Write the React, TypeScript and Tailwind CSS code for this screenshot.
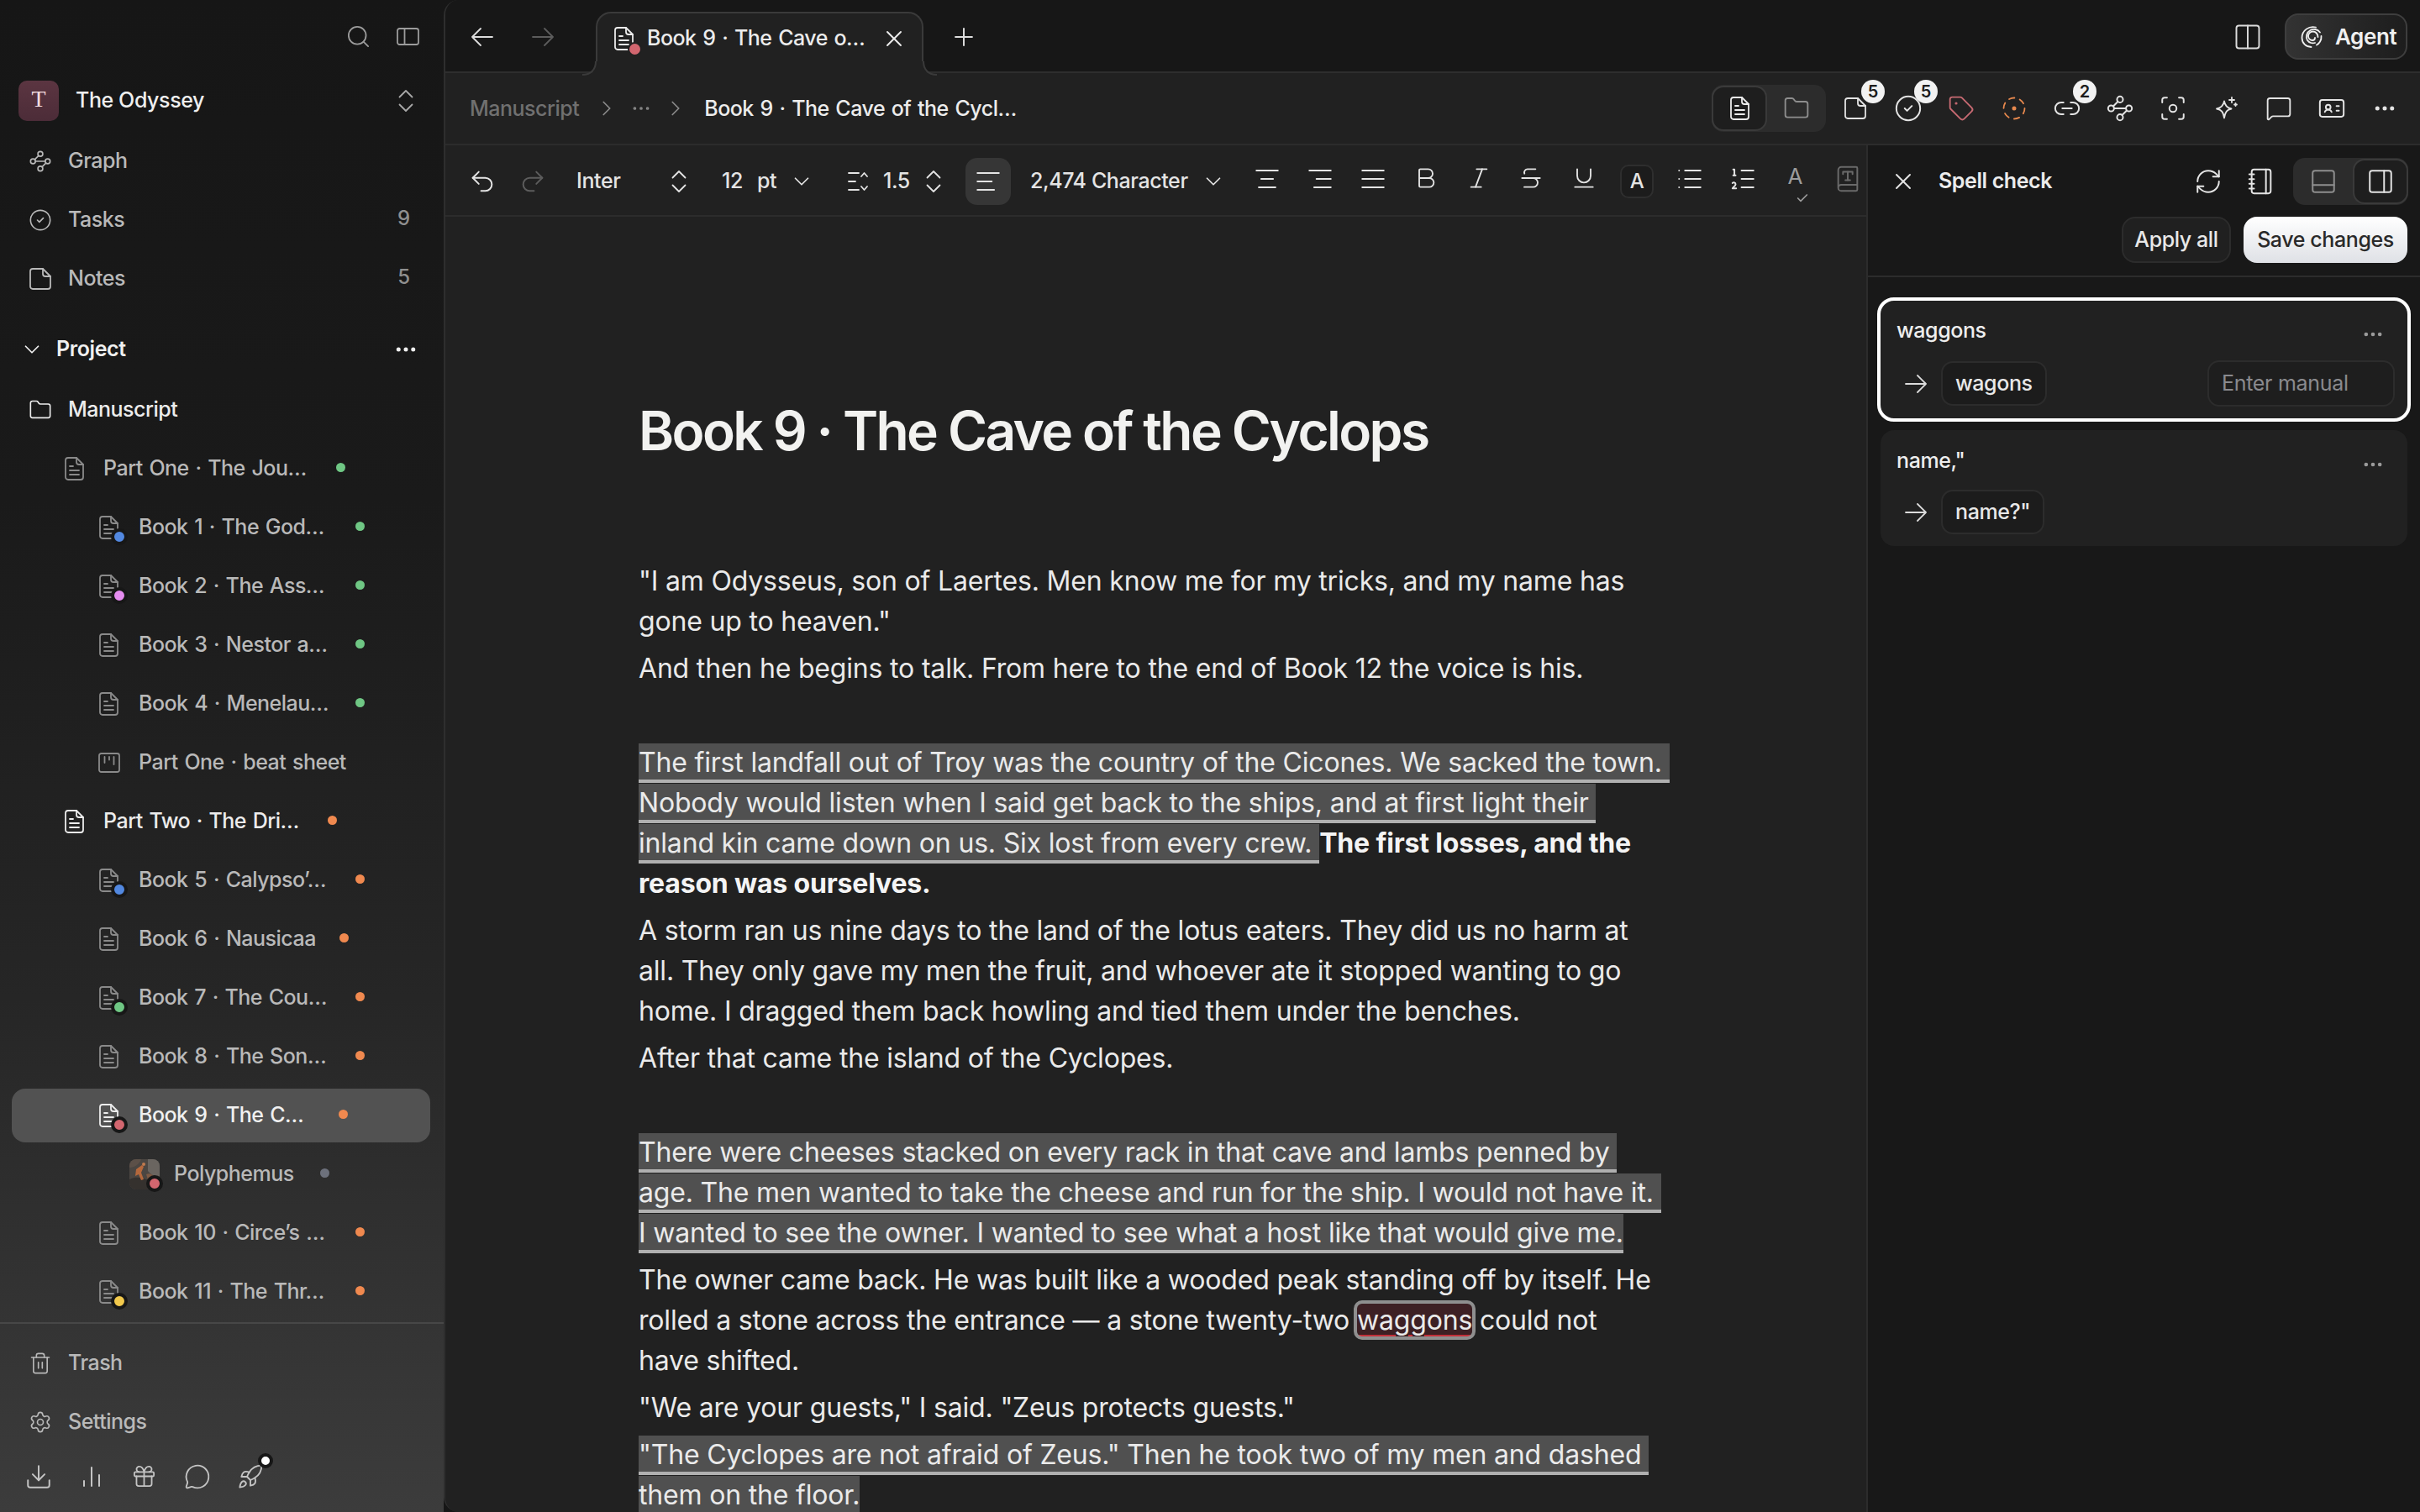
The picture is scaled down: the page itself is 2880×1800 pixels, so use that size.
import type { ReactNode } from "react";
import {
  AlignCenter,
  AlignJustify,
  AlignLeft,
  AlignRight,
  Bold,
  BookType,
  Check,
  ChevronDown,
  ChevronRight,
  ChevronsUpDown,
  CircleCheck,
  Columns2,
  Download,
  Ellipsis,
  Focus,
  Folder,
  Gift,
  IdCard,
  Italic,
  Link2,
  List,
  ListOrdered,
  MessageCircle,
  MessageSquare,
  Notebook,
  PanelBottom,
  PanelRight,
  Plus,
  Redo2,
  RefreshCw,
  Rocket,
  Search,
  Settings,
  Strikethrough,
  Tag,
  Trash2,
  Underline,
  Undo2,
  Waypoints,
  X,
} from "lucide-react";

const sw = 1.4;

function DocIcon({ className }: { className?: string }) {
  return (
    <svg viewBox="0 0 23 28" width="23" height="28" fill="none" stroke="currentColor" strokeWidth="1.8" strokeLinecap="round" strokeLinejoin="round" className={className}>
      <path d="M4 1h10l8 8v15a3 3 0 0 1-3 3H4a3 3 0 0 1-3-3V4a3 3 0 0 1 3-3z" />
      <path d="M14 1v5a3 3 0 0 0 3 3h5" />
      <path d="M6 11h4M6 16h11M6 21h11" />
    </svg>
  );
}

function NoteIcon() {
  return (
    <svg viewBox="0 0 26 26" width="26" height="26" fill="none" stroke="currentColor" strokeWidth="1.8" strokeLinecap="round" strokeLinejoin="round">
      <path d="M4 1h12l9 9v12a3 3 0 0 1-3 3H4a3 3 0 0 1-3-3V4a3 3 0 0 1 3-3z" />
      <path d="M16 1v6a3 3 0 0 0 3 3h6" />
    </svg>
  );
}

function SideIcon() {
  return (
    <svg viewBox="0 0 27 21" width="27" height="21" fill="none" stroke="currentColor" strokeWidth="1.8" strokeLinejoin="round">
      <rect x="1" y="1" width="25" height="19" rx="2.5" />
      <path d="M9.500 1v19" />
    </svg>
  );
}

function ArrowIcon({ left }: { left?: boolean }) {
  return (
    <svg viewBox="0 0 26 22" width="26" height="22" fill="none" stroke="currentColor" strokeWidth="1.8" strokeLinecap="round" strokeLinejoin="round">
      {left ? <path d="M25 11H1M11 1L1 11l10 10" /> : <path d="M1 11h24M15 1l10 10-10 10" />}
    </svg>
  );
}

function BoardIcon() {
  return (
    <svg viewBox="0 0 26 24" width="26" height="24" fill="none" stroke="currentColor" strokeWidth="1.8" strokeLinecap="round" className="-mx-[1.500px] text-[#8a8a8a]">
      <rect x="1" y="1" width="24" height="22" rx="2.5" />
      <path d="M7.500 5v7M13 5v3.500M18.500 5v9" />
    </svg>
  );
}

function BarsIcon() {
  return (
    <svg viewBox="0 0 26 28" width="26" height="28" fill="none" stroke="currentColor" strokeWidth="2" strokeLinecap="round">
      <path d="M4 19v6M13 3v22M22 12v13" />
    </svg>
  );
}

function LineHeightIcon() {
  return (
    <svg viewBox="0 0 28 28" width="28" height="28" fill="none" stroke="currentColor" strokeWidth="1.8" strokeLinecap="round" strokeLinejoin="round">
      <path d="M2 4h12M2 14h8M2 24h12" />
      <path d="M17 8l3.500-4L24 8M17 20l3.500 4 3.500-4" />
    </svg>
  );
}

function DashedTarget() {
  return (
    <svg viewBox="0 0 28 28" width="28" height="28" fill="none" stroke="#e8894e" strokeWidth="1.8" strokeLinecap="round">
      <circle cx="14" cy="14" r="12.500" strokeDasharray="6.500 6.600" />
      <circle cx="14" cy="14" r="1.600" fill="#e8894e" />
    </svg>
  );
}

function SparkIcon() {
  return (
    <svg viewBox="0 0 30 30" width="30" height="30" fill="none" stroke="currentColor" strokeWidth="1.8" strokeLinecap="round" strokeLinejoin="round">
      <path d="M13 6.500c1 5.500 3.500 8 8.500 9-5 1-7.500 3.500-8.500 11-1-7.500-3.500-10-9-11 5.500-1 8-3.500 9-9z" />
      <path d="M22 2v6M19 5h6M26.500 9v3M25 10.500h3" />
    </svg>
  );
}

function SpiralIcon() {
  return (
    <svg viewBox="0 0 28 28" width="28" height="28" fill="none" stroke="currentColor" strokeWidth="1.8" strokeLinecap="round">
      <path d="M19 2.500C11 0.500 2.500 6 2.500 15c0 6.500 5 11 11 11" />
      <path d="M24 8.500C21 4.500 16 4 12.500 6 8 8.500 6.500 14 9 18c2 3 6 4 9 3" />
      <path d="M25.500 13c.500 5-2.500 9-5.500 10.500" />
      <path d="M21.500 14c0-4-3-6.500-6-6.500s-5.500 2.500-5.500 5.500 2.500 5 5 5c2 0 3-1.500 3-3" />
    </svg>
  );
}

function Painting() {
  return (
    <svg viewBox="0 0 36 36" width="36" height="36" className="rounded-[8px]">
      <rect width="36" height="36" fill="#4b4642" />
      <path d="M0 24c8-4 14-2 20 0s12 2 16 0v12H0z" fill="#35312e" />
      <path d="M22 0h14v20c-6 2-10-2-14-6z" fill="#6a6560" />
      <path d="M0 0h14c-2 6-8 10-14 10z" fill="#5c5048" />
      <path d="M8 12l7-5 2 2-3 7 3 8-3 1-3-7-4 2z" fill="#b5683c" />
      <circle cx="17" cy="6" r="2" fill="#c07a4e" />
      <path d="M20 18c4-2 8 0 10 4l-8 2z" fill="#7d5a44" />
    </svg>
  );
}

function Badge({ color, className }: { color: string; className: string }) {
  return <span className={`absolute size-[20px] rounded-full border-4 border-[#171717] ${color} ${className}`} />;
}

type Item = {
  label: string;
  pad: string;
  gap: string;
  width: string;
  dot?: string;
  badge?: string;
  kind?: "doc" | "board" | "thumb";
  active?: boolean;
  bright?: boolean;
};

const green = "bg-[#6fc784]";
const orange = "bg-[#f0894f]";
const d1 = "pl-[63px]";
const g1 = "ml-[23px]";
const d2 = "pl-[104px]";
const g2 = "ml-[24px]";
const bookW = "w-[258px]";

const tree: Item[] = [
  { label: "Part One · The Jou…", pad: d1, gap: g1, width: "w-[277px]", dot: green },
  { label: "Book 1 · The God…", pad: d2, gap: g2, width: bookW, dot: green, badge: "bg-[#5288e0]" },
  { label: "Book 2 · The Ass…", pad: d2, gap: g2, width: bookW, dot: green, badge: "bg-[#e58cf0]" },
  { label: "Book 3 · Nestor a…", pad: d2, gap: g2, width: bookW, dot: green },
  { label: "Book 4 · Menelau…", pad: d2, gap: g2, width: bookW, dot: green },
  { label: "Part One · beat sheet", pad: d2, gap: g2, width: "w-[258px]", kind: "board" },
  { label: "Part Two · The Dri…", pad: d1, gap: g1, width: "w-[267px]", dot: orange, bright: true },
  { label: "Book 5 · Calypso’…", pad: d2, gap: g2, width: bookW, dot: orange, badge: "bg-[#5288e0]" },
  { label: "Book 6 · Nausicaa", pad: d2, gap: g2, width: "w-[239px]", dot: orange },
  { label: "Book 7 · The Cou…", pad: d2, gap: g2, width: bookW, dot: orange, badge: "bg-[#6fc784]" },
  { label: "Book 8 · The Son…", pad: d2, gap: g2, width: bookW, dot: orange },
  { label: "Book 9 · The C…", pad: d2, gap: g2, width: "w-[238px]", dot: orange, badge: "bg-[#d2666f]", active: true },
  { label: "Polyphemus", pad: "pl-[140px]", gap: "ml-[17px]", width: "w-[174px]", dot: "bg-[#6d717c]", badge: "bg-[#d2666f]", kind: "thumb" },
  { label: "Book 10 · Circe’s …", pad: d2, gap: g2, width: bookW, dot: orange },
  { label: "Book 11 · The Thr…", pad: d2, gap: g2, width: bookW, dot: orange, badge: "bg-[#f2c94c]" },
];

function TreeRow({ item }: { item: Item }) {
  const tone = item.active
    ? "bg-[#525252] text-[#f0f0f0]"
    : item.bright
      ? "text-[#ececec]"
      : "text-[#b9b9b9]";
  const iconTone = item.active || item.bright ? "text-[#ececec]" : "text-[#8a8a8a]";
  return (
    <div className={`ml-[14px] mr-[16px] flex h-[64px] shrink-0 items-center rounded-[16px] ${item.pad} ${tone}`}>
      <span className="relative flex shrink-0 items-center justify-center">
        {item.kind === "thumb" ? <Painting /> : item.kind === "board" ? <BoardIcon /> : <DocIcon className={iconTone} />}
        {item.badge ? (
          <Badge color={item.badge} className={item.kind === "thumb" ? "-right-[4px] -bottom-[3px]" : "-right-[11px] -bottom-[7px]"} />
        ) : null}
      </span>
      <span className={`whitespace-nowrap text-[25px] font-medium tracking-[-0.5px] [word-spacing:1.500px] ${item.gap} ${item.width}`}>{item.label}</span>
      {item.dot ? <span className={`size-[11px] -translate-y-[2px] rounded-full ${item.dot}`} /> : null}
    </div>
  );
}

function NavRow({ icon, label, count, bright }: { icon: ReactNode; label: string; count?: string; bright?: boolean }) {
  return (
    <div className={`mx-[14px] flex h-[64px] shrink-0 items-center pl-[20px] pr-[22px] ${bright ? "text-[#ececec]" : "text-[#b9b9b9]"}`}>
      <span className="flex w-[28px] shrink-0 justify-center">{icon}</span>
      <span className="ml-[19px] text-[25px] font-medium tracking-[-0.5px]">{label}</span>
      {count ? <span className="ml-auto -translate-y-[2px] pr-[4px] text-[24px] font-medium text-[#8f8f8f]">{count}</span> : null}
    </div>
  );
}

function Sidebar() {
  return (
    <aside className="flex h-full w-[528px] shrink-0 flex-col overflow-hidden bg-[linear-gradient(180deg,#161616_0%,#1a1a1a_33%,#262626_66%,#3c3c3c_100%)]">
      <div className="flex h-[89px] shrink-0 items-center justify-end gap-[30px] pb-[2px] pr-[29px] text-[#9c9c9c]">
        <Search size={31} strokeWidth={sw} />
        <SideIcon />
      </div>
      <div className="flex h-[62px] shrink-0 items-center pl-[22px] pr-[27px]">
        <span className="flex size-[48px] items-center justify-center rounded-[10px] bg-[linear-gradient(180deg,#5b3541,#4c2c38)] pb-[4px] [font-family:'Liberation_Serif',serif] text-[28px] text-[#f3dde0]">
          T
        </span>
        <span className="ml-[20px] text-[25px] font-medium tracking-[-0.4px] text-[#efefef]">The Odyssey</span>
        <ChevronsUpDown size={36} strokeWidth={1.2} className="ml-auto text-[#a8a8a8]" />
      </div>
      <div className="mt-[9px] flex shrink-0 flex-col gap-[6px]">
        <NavRow icon={<Waypoints size={34} strokeWidth={sw} />} label="Graph" />
        <NavRow icon={<CircleCheck size={34} strokeWidth={sw} />} label="Tasks" count="9" />
        <NavRow icon={<NoteIcon />} label="Notes" count="5" />
      </div>
      <div className="mx-[14px] mt-[20px] flex h-[64px] shrink-0 items-center pl-[9px] pr-[16px] text-[#f0f0f0]">
        <ChevronDown size={30} strokeWidth={sw} />
        <span className="ml-[14px] text-[25px] font-semibold tracking-[-0.4px]">Project</span>
        <Ellipsis size={30} strokeWidth={2} className="ml-auto" />
      </div>
      <div className="mt-[8px] flex min-h-0 flex-1 flex-col gap-[6px] overflow-hidden">
        <NavRow bright icon={<Folder size={34} strokeWidth={sw} />} label="Manuscript" />
        {tree.map((item) => (
          <TreeRow key={item.label} item={item} />
        ))}
      </div>
      <div className="flex shrink-0 flex-col gap-[6px] border-t-2 border-[#474747] pt-[15px]">
        <NavRow icon={<Trash2 size={32} strokeWidth={sw} />} label="Trash" />
        <NavRow icon={<Settings size={34} strokeWidth={sw} />} label="Settings" />
      </div>
      <div className="flex h-[75px] shrink-0 items-center pb-[10px] pl-[14px] text-[#c4c4c4]">
        <span className="flex w-[63px] justify-center"><Download size={34} strokeWidth={sw} /></span>
        <span className="flex w-[63px] justify-center"><BarsIcon /></span>
        <span className="flex w-[63px] justify-center"><Gift size={31} strokeWidth={sw} /></span>
        <span className="flex w-[63px] justify-center"><MessageCircle size={32} strokeWidth={sw} /></span>
        <span className="relative flex w-[63px] justify-center">
          <Rocket size={32} strokeWidth={sw} />
          <span className="absolute -top-[12px] right-[4px] size-[18px] rounded-full border-4 border-[#171717] bg-white" />
        </span>
      </div>
    </aside>
  );
}

function TabBar() {
  return (
    <div className="relative flex h-[87px] shrink-0 items-start border-b-2 border-[#2e2e2e] bg-[#171717] pl-[16px] pr-[15px]">
      <span className="flex h-[87px] w-[56px] items-center justify-center text-[#dcdcdc]"><ArrowIcon left /></span>
      <span className="ml-[16px] flex h-[87px] w-[56px] items-center justify-center text-[#5c5c5c]"><ArrowIcon /></span>
      <div className="relative z-10 ml-[35px] mt-[14px] flex h-[75px] w-[390px] items-center rounded-t-[18px] border-x-2 border-t-2 border-[#3a3a3a] bg-[#212121] pb-[14px] text-[#ececec]">
        <svg viewBox="0 0 18 18" width="18" height="18" className="absolute -bottom-[2px] -left-[18px]">
          <path d="M18 0v18H0c10 0 16-6 16-18z" fill="#212121" />
          <path d="M0 16c10 0 16-6 16-16" fill="none" stroke="#3a3a3a" strokeWidth="2" />
        </svg>
        <svg viewBox="0 0 18 18" width="18" height="18" className="absolute -bottom-[2px] -right-[18px]">
          <path d="M0 0v18h18C8 18 2 12 2 0z" fill="#212121" />
          <path d="M18 16C8 16 2 10 2 0" fill="none" stroke="#3a3a3a" strokeWidth="2" />
        </svg>
        <span className="relative ml-[20px] flex shrink-0">
          <DocIcon />
          <Badge color="bg-[#d2666f]" className="-right-[10px] -bottom-[7px] !size-[17px] !border-[#212121] !border-[2px]" />
        </span>
        <span className="ml-[16px] whitespace-nowrap text-[25px] font-medium tracking-[-0.5px] [word-spacing:1.500px]">Book 9 · The Cave o…</span>
        <X size={32} strokeWidth={sw} className="ml-auto mr-[17px]" />
      </div>
      <span className="ml-[20px] flex h-[87px] w-[56px] items-center justify-center text-[#dcdcdc]"><Plus size={34} strokeWidth={sw} /></span>
      <div className="ml-auto flex h-[87px] items-center">
        <Columns2 size={36} strokeWidth={1.3} className="text-[#dcdcdc]" />
        <div className="ml-[26px] flex h-[55px] w-[146px] items-center rounded-[16px] border-2 border-[#3e3e3e] bg-[linear-gradient(90deg,#333333,#1d1d1d)] pl-[16px] text-[#f0f0f0]">
          <SpiralIcon />
          <span className="ml-[14px] text-[26px] font-semibold tracking-[-0.4px]">Agent</span>
        </div>
      </div>
    </div>
  );
}

function CountIcon({ children, count }: { children: ReactNode; count?: string }) {
  return (
    <span className="relative flex h-[34px] w-[63px] shrink-0 items-center justify-center text-[#e4e4e4]">
      {children}
      {count ? (
        <span className="absolute -top-[17px] left-[39px] flex size-[28px] items-center justify-center rounded-full bg-[#f2f2f2] text-[20px] font-semibold text-[#1c1c1c]">
          {count}
        </span>
      ) : null}
    </span>
  );
}

function Breadcrumb() {
  return (
    <div className="flex h-[86px] shrink-0 items-center border-b-2 border-[#2c2c2c] bg-[#212121] pl-[29px] pr-[11px]">
      <span className="translate-y-[1px] text-[25px] font-medium tracking-[-0.5px] text-[#707070]">Manuscript</span>
      <ChevronRight size={30} strokeWidth={sw} className="ml-[18px] text-[#8a8a8a]" />
      <Ellipsis size={26} strokeWidth={sw} className="ml-[13px] text-[#8a8a8a]" />
      <ChevronRight size={30} strokeWidth={sw} className="ml-[13px] text-[#8a8a8a]" />
      <span className="ml-[19px] translate-y-[1px] text-[25px] font-medium tracking-[-0.5px] text-[#ececec] [word-spacing:1.500px]">Book 9 · The Cave of the Cycl…</span>
      <div className="ml-auto mr-[3px] flex h-[56px] w-[136px] items-center rounded-[14px] bg-[#2c2c2c]">
        <span className="flex h-[54px] w-[66px] items-center justify-center rounded-[14px] border-2 border-[#3a3a3a] bg-[#1e1e1e] text-[#ececec]">
          <DocIcon />
        </span>
        <span className="flex flex-1 justify-center text-[#8e8e8e]"><Folder size={32} strokeWidth={sw} /></span>
      </div>
      <CountIcon count="5"><NoteIcon /></CountIcon>
      <CountIcon count="5"><CircleCheck size={34} strokeWidth={sw} /></CountIcon>
      <CountIcon><Tag size={32} strokeWidth={sw} className="text-[#c76a72]" /></CountIcon>
      <CountIcon><DashedTarget /></CountIcon>
      <CountIcon count="2"><Link2 size={34} strokeWidth={sw} /></CountIcon>
      <CountIcon><Waypoints size={34} strokeWidth={sw} /></CountIcon>
      <CountIcon><Focus size={34} strokeWidth={sw} /></CountIcon>
      <CountIcon><SparkIcon /></CountIcon>
      <CountIcon><MessageSquare size={32} strokeWidth={sw} /></CountIcon>
      <CountIcon><IdCard size={34} strokeWidth={sw} /></CountIcon>
      <CountIcon><Ellipsis size={30} strokeWidth={2} /></CountIcon>
    </div>
  );
}

function ToolCell({ children }: { children: ReactNode }) {
  return <span className="flex w-[62.800px] shrink-0 justify-center">{children}</span>;
}

function Toolbar() {
  return (
    <div className="flex h-[85px] shrink-0 items-center overflow-hidden border-b-2 border-[#2c2c2c] bg-[#212121] pl-[27px] pt-[2px] text-[25px] font-medium tracking-[-0.4px] text-[#e4e4e4]">
      <Undo2 size={34} strokeWidth={sw} className="shrink-0" />
      <Redo2 size={34} strokeWidth={sw} className="ml-[26px] shrink-0 text-[#5c5c5c]" />
      <span className="ml-[35px] w-[105px] shrink-0">Inter</span>
      <ChevronsUpDown size={36} strokeWidth={1.2} className="-ml-[1px] shrink-0" />
      <span className="ml-[33px] w-[42px] shrink-0">12</span>
      <span className="w-[38px] shrink-0">pt</span>
      <ChevronDown size={30} strokeWidth={sw} className="shrink-0" />
      <span className="ml-[39px] shrink-0"><LineHeightIcon /></span>
      <span className="ml-[15px] w-[30px] shrink-0">1.5</span>
      <ChevronsUpDown size={36} strokeWidth={1.2} className="ml-[12px] shrink-0" />
      <span className="ml-[20px] flex h-[56px] w-[54px] shrink-0 items-center justify-center rounded-[14px] bg-[#363636]">
        <AlignLeft size={34} strokeWidth={sw} />
      </span>
      <span className="ml-[23px] w-[186px] shrink-0 whitespace-nowrap">2,474 Character</span>
      <ChevronDown size={30} strokeWidth={sw} className="ml-[17px] shrink-0" />
      <span className="ml-[18px] flex shrink-0">
        <ToolCell><AlignCenter size={34} strokeWidth={sw} /></ToolCell>
        <ToolCell><AlignRight size={34} strokeWidth={sw} /></ToolCell>
        <ToolCell><AlignJustify size={34} strokeWidth={sw} /></ToolCell>
        <ToolCell><Bold size={32} strokeWidth={sw} /></ToolCell>
        <ToolCell><Italic size={32} strokeWidth={sw} /></ToolCell>
        <ToolCell><Strikethrough size={32} strokeWidth={sw} /></ToolCell>
        <ToolCell><Underline size={32} strokeWidth={sw} /></ToolCell>
        <ToolCell>
          <span className="flex size-[40px] items-center justify-center rounded-[10px] border-2 border-[#2e2e2e] bg-[#1c1c1c] text-[24px] font-medium">A</span>
        </ToolCell>
        <ToolCell><List size={34} strokeWidth={sw} /></ToolCell>
        <ToolCell><ListOrdered size={34} strokeWidth={sw} /></ToolCell>
        <ToolCell>
          <span className="relative flex w-[30px] translate-y-[1px] justify-center text-[26px] font-normal leading-none text-[#9c9c9c]">
            A
            <Check size={16} strokeWidth={2.500} className="absolute -bottom-[7px] -right-[2px]" />
          </span>
        </ToolCell>
        <ToolCell><BookType size={34} strokeWidth={sw} className="text-[#6a6a6a]" /></ToolCell>
      </span>
    </div>
  );
}

const mark = "border-b-4 border-[#b0b0b0] bg-[#505050] pb-[1px] pt-[3px] [box-decoration-break:clone]";

function Para({ children }: { children?: ReactNode }) {
  return <p className="mb-[8px] min-h-[48px] whitespace-pre-wrap">{children}</p>;
}

function Editor() {
  return (
    <div className="min-h-0 flex-1 overflow-hidden bg-[#212121] pl-[230px] pr-[242px] pt-[206px] text-[32px] leading-[48px] tracking-[-0.18px] text-[#eaeaea]">
      <h1 className="mb-[106px] whitespace-nowrap text-[64px] font-semibold leading-[98px] tracking-[-2.6px] text-[#f2f2f0]">
        Book 9 · The Cave of the Cyclops
      </h1>
      <Para>"I am Odysseus, son of Laertes. Men know me for my tricks, and my name has gone up to heaven."</Para>
      <Para>And then he begins to talk. From here to the end of Book 12 the voice is his.</Para>
      <Para />
      <Para>
        <span className={mark}>
          The first landfall out of Troy was the country of the Cicones. We sacked the town. Nobody would listen when I said get back to the ships, and at first light their inland kin came down on us. Six lost from every crew.{" "}
        </span>
        <strong className="font-bold text-[#f4f4f4]">The first losses, and the reason was ourselves.</strong>
      </Para>
      <Para>A storm ran us nine days to the land of the lotus eaters. They did us no harm at all. They only gave my men the fruit, and whoever ate it stopped wanting to go home. I dragged them back howling and tied them under the benches.</Para>
      <Para>After that came the island of the Cyclopes.</Para>
      <Para />
      <Para>
        <span className={mark}>
          There were cheeses stacked on every rack in that cave and lambs penned by age. The men wanted to take the cheese and run for the ship. I would not have it. I wanted to see the owner. I wanted to see what a host like that would give me.
        </span>
      </Para>
      <Para>
        The owner came back. He was built like a wooded peak standing off by itself. He rolled a stone across the entrance — a stone twenty-two{" "}
        <span className="rounded-[6px] bg-[#3d2024] underline decoration-[#c2303a] decoration-[3px] underline-offset-[6px] outline-[4px] outline-[#8f8f8f] outline-solid">waggons</span>{" "}
        could not have shifted.
      </Para>
      <Para>"We are your guests," I said. "Zeus protects guests."</Para>
      <Para>
        <span className={mark}>"The Cyclopes are not afraid of Zeus." Then he took two of my men and dashed them on the floor.</span>
      </Para>
    </div>
  );
}

function SpellCard({ word, fix, selected }: { word: string; fix: string; selected?: boolean }) {
  return (
    <div className={selected ? "mx-[11px] h-[148px] rounded-[20px] border-4 border-white bg-[#212121]" : "mx-[15px] mt-[10px] h-[138px] rounded-[16px] bg-[#212121]"}>
      <div className={`flex items-start justify-between pl-[19px] pr-[14px] ${selected ? "pt-[20px]" : "pt-[21px]"}`}>
        <span className="text-[25px] font-medium leading-[30px] tracking-[-0.4px] text-[#eeeeee]">{word}</span>
        <Ellipsis size={28} strokeWidth={2} className="mr-[13px] mt-[6px] text-[#9a9a9a]" />
      </div>
      <div className={`flex items-center pl-[29px] pr-[15px] ${selected ? "mt-[17px]" : "mt-[16px]"}`}>
        <span className="text-[#dcdcdc]"><ArrowIcon /></span>
        <span className="ml-[17px] flex h-[53px] items-center rounded-[14px] border-2 border-[#2c2c2c] bg-[#1c1c1c] px-[15px] text-[25px] font-medium tracking-[-0.4px] text-[#e8e8e8]">{fix}</span>
        {selected ? (
          <span className="ml-auto flex h-[55px] w-[223px] items-center rounded-[14px] border-2 border-[#2c2c2c] bg-[#1e1e1e] pl-[15px] text-[25px] tracking-[-0.3px] text-[#8a8a8e]">Enter manual</span>
        ) : null}
      </div>
    </div>
  );
}

function SpellPanel() {
  return (
    <div className="flex w-[659px] shrink-0 flex-col border-l-2 border-[#2c2c2c] bg-[#181818]">
      <div className="flex h-[85px] shrink-0 items-center pl-[26px] pr-[14px] text-[#e4e4e4]">
        <X size={32} strokeWidth={sw} />
        <span className="ml-[26px] text-[25px] font-semibold tracking-[-0.4px] text-[#ececec]">Spell check</span>
        <RefreshCw size={34} strokeWidth={sw} className="ml-auto" />
        <Notebook size={34} strokeWidth={sw} className="ml-[29px]" />
        <div className="ml-[21px] flex h-[56px] w-[137px] items-center rounded-[14px] bg-[#2c2c2c]">
          <span className="flex flex-1 justify-center text-[#8e8e8e]"><PanelBottom size={34} strokeWidth={sw} /></span>
          <span className="flex h-[54px] w-[66px] items-center justify-center rounded-[14px] border-2 border-[#3a3a3a] bg-[#1e1e1e]">
            <PanelRight size={34} strokeWidth={sw} />
          </span>
        </div>
      </div>
      <div className="flex h-[72px] shrink-0 items-start justify-end gap-[15px] border-b-2 border-[#2c2c2c] pr-[15px]">
        <span className="flex h-[55px] w-[130px] items-center justify-center rounded-[16px] border-2 border-[#2c2c2c] bg-[#202020] text-[25px] font-medium tracking-[-0.4px] text-[#e8e8e8]">Apply all</span>
        <span className="flex h-[55px] w-[195px] items-center justify-center rounded-[16px] bg-[linear-gradient(180deg,#ffffff,#dfe1e6)] text-[25px] font-medium tracking-[-0.4px] text-[#2a2a2a]">Save changes</span>
      </div>
      <div className="pt-[24px]">
        <SpellCard selected word="waggons" fix="wagons" />
        <SpellCard word={'name,"'} fix={'name?"'} />
      </div>
    </div>
  );
}

export default function App() {
  return (
    <div className="flex h-[1800px] w-[2880px] overflow-hidden bg-[#161616] [font-family:Inter,sans-serif]">
      <Sidebar />
      <main className="flex h-full min-w-0 flex-1 flex-col overflow-hidden rounded-l-[18px] border-l-2 border-[#2e2e2e] bg-[#212121]">
        <TabBar />
        <Breadcrumb />
        <div className="flex min-h-0 flex-1">
          <div className="flex min-w-0 flex-1 flex-col">
            <Toolbar />
            <Editor />
          </div>
          <SpellPanel />
        </div>
      </main>
    </div>
  );
}
